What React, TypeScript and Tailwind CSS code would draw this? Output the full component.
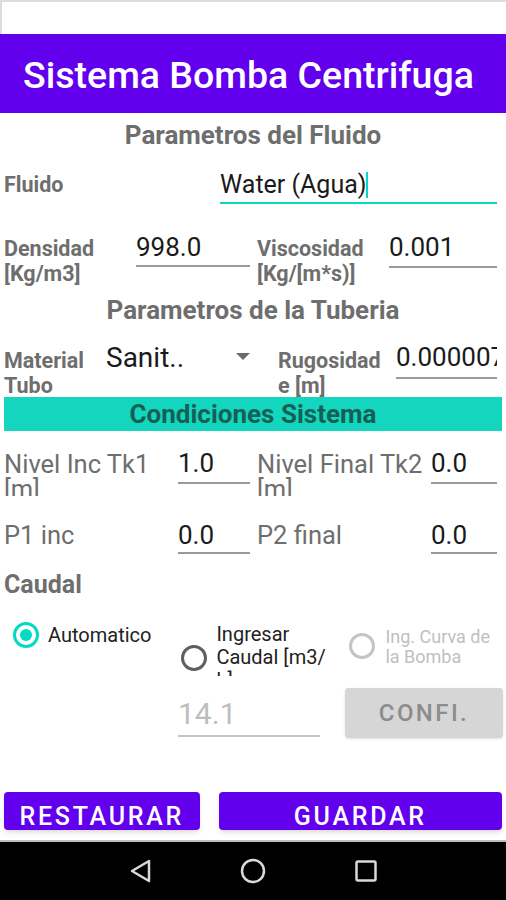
import React from "react";

const label = "font-bold text-[21.5px] leading-[25px] text-[#6e6e6e]";
const value = "text-[26px] leading-[28px] text-[#1a1a1a] whitespace-nowrap";

function Field({ w, text, mt, h, clip }: { w: string; text: string; mt: string; h: string; clip?: boolean }) {
  return (
    <div className={`${w} ${mt} ${h} border-b-2 border-[#9a9a9a] ${value} ${clip ? "overflow-hidden" : ""}`}>
      {text}
    </div>
  );
}

function Radio({ on, disabled }: { on?: boolean; disabled?: boolean }) {
  const ring = on ? "border-[#03DAC5]" : disabled ? "border-[#c4c4c4]" : "border-[#5f5f5f]";
  return (
    <div className={`w-[26px] h-[26px] rounded-full border-[3px] ${ring} flex items-center justify-center shrink-0`}>
      {on && <div className="w-[12px] h-[12px] rounded-full bg-[#03DAC5]" />}
    </div>
  );
}

export default function App() {
  return (
    <div className="w-[506px] h-[900px] bg-white overflow-hidden flex flex-col" style={{ fontFamily: "Roboto, 'Noto Sans', sans-serif" }}>
      {/* status area */}
      <div className="h-[34px] shrink-0 border-t-2 border-l-2 border-[#dcdcdc]" />

      {/* title bar */}
      <div className="h-[79px] shrink-0 bg-[#6200EE] flex items-center pl-[23px] pt-[5px]">
        <span className="text-white font-medium text-[37.5px] leading-none">Sistema Bomba Centrifuga</span>
      </div>

      <div className="h-[42px] shrink-0 flex items-center justify-center pt-[3px]">
        <span className="font-bold text-[26px] text-[#6e6e6e]">Parametros del Fluido</span>
      </div>

      {/* Fluido */}
      <div className="h-[60px] shrink-0 flex px-1">
        <div className={`w-[216px] pt-[17px] ${label}`}>Fluido</div>
        <div className="w-[277px] mt-[16px] h-[33px] border-b-2 border-[#03DAC5] whitespace-nowrap">
          <span className="text-[25px] leading-[28px] text-[#1a1a1a]">Water (Agua)</span>
          <span className="inline-block w-[2px] h-[26px] bg-[#03DAC5] align-[-5px]" />
        </div>
      </div>

      {/* Densidad / Viscosidad */}
      <div className="h-[80px] shrink-0 flex px-1">
        <div className={`w-[132px] pt-[21px] ${label}`}>Densidad<br />[Kg/m3]</div>
        <Field w="w-[114px]" mt="mt-[18px]" h="h-[34px]" text="998.0" />
        <div className={`ml-[7px] w-[132px] pt-[21px] ${label}`}>Viscosidad<br />[Kg/[m*s)]</div>
        <Field w="w-[108px]" mt="mt-[18px]" h="h-[35px]" text="0.001" />
      </div>

      <div className="h-[30px] shrink-0 flex items-center justify-center">
        <span className="font-bold text-[26px] text-[#6e6e6e]">Parametros de la Tuberia</span>
      </div>

      {/* Material / Rugosidad */}
      <div className="h-[72px] shrink-0 flex px-1">
        <div className={`w-[102px] pt-[23px] ${label}`}>Material<br />Tubo</div>
        <div className="w-[172px] mt-[18px] h-[30px] flex items-start pr-[28px]">
          <span className="text-[28px] leading-[30px] text-[#1a1a1a]">Sanit..</span>
          <svg className="ml-auto mt-[10px]" width="14" height="7" viewBox="0 0 14 7">
            <path d="M0 0 L14 0 L7 7 Z" fill="#6b6b6b" />
          </svg>
        </div>
        <div className={`w-[118px] pt-[23px] ${label}`}>Rugosidad<br />e [m]</div>
        <Field w="w-[101px]" mt="mt-[18px]" h="h-[36px]" text="0.000007" clip />
      </div>

      {/* Condiciones Sistema */}
      <div className="h-[34px] shrink-0 mx-1 bg-[#14d6bf] flex items-center justify-center">
        <span className="font-bold text-[26px] leading-[30px] text-[#165f56]">Condiciones Sistema</span>
      </div>

      {/* Nivel */}
      <div className="h-[74px] shrink-0 flex px-1">
        <div className="w-[174px] mt-[21px] h-[44px] overflow-hidden text-[25.5px] leading-[25px] text-[#6e6e6e]">Nivel Inc Tk1<br />[m]</div>
        <Field w="w-[72px]" mt="mt-[18px]" h="h-[35px]" text="1.0" />
        <div className="ml-[7px] w-[174px] mt-[21px] h-[44px] overflow-hidden text-[25.5px] leading-[25px] text-[#6e6e6e]">Nivel Final Tk2<br />[m]</div>
        <Field w="w-[66px]" mt="mt-[18px]" h="h-[35px]" text="0.0" />
      </div>

      {/* P1 / P2 */}
      <div className="h-[60px] shrink-0 flex px-1">
        <div className="w-[174px] pt-[17px] text-[25.5px] leading-[26px] text-[#6e6e6e]">P1 inc</div>
        <Field w="w-[72px]" mt="mt-[16px]" h="h-[33px]" text="0.0" />
        <div className="ml-[7px] w-[174px] pt-[17px] text-[25.5px] leading-[26px] text-[#6e6e6e]">P2 final</div>
        <Field w="w-[66px]" mt="mt-[16px]" h="h-[33px]" text="0.0" />
      </div>

      <div className="h-[40px] shrink-0 px-1 pt-[7px]">
        <span className="font-bold text-[25px] leading-[26px] text-[#6e6e6e]">Caudal</span>
      </div>

      {/* radios */}
      <div className="h-[78px] shrink-0 flex">
        <div className="ml-[13px] mt-[17px] flex items-center h-[26px]">
          <Radio on />
          <span className="ml-[9px] text-[20px] text-[#222]">Automatico</span>
        </div>
        <div className="ml-[30px] flex">
          <div className="mt-[40px]"><Radio /></div>
          <div className="ml-[9px] mt-[18px] h-[53px] overflow-hidden text-[20px] leading-[23px] text-[#222] w-[120px]">
            Ingresar<br />Caudal [m3/<br />h]
          </div>
        </div>
        <div className="ml-[13px] flex">
          <div className="mt-[28px]"><Radio disabled /></div>
          <div className="ml-[10px] mt-[22px] text-[18px] leading-[20px] text-[#c0c0c0]">
            Ing. Curva de<br />la Bomba
          </div>
        </div>
      </div>

      {/* caudal input + confi */}
      <div className="h-[62px] shrink-0 flex">
        <div className="ml-[178px] w-[142px] mt-[16px] h-[38px] border-b-2 border-[#c4c4c4]">
          <span className="text-[30px] leading-[30px] text-[#bdbdbd]">14.1</span>
        </div>
        <div className="ml-[25px] w-[158px] mt-[5px] h-[50px] rounded bg-[#d6d6d6] shadow-sm flex items-center justify-center">
          <span className="font-medium text-[24px] tracking-[0.1em] text-[#8c8c8c]">CONFI.</span>
        </div>
      </div>

      {/* buttons */}
      <div className="mt-[47px] h-[38px] shrink-0 flex px-1 gap-[19px]">
        <div className="w-[196px] h-[38px] rounded bg-[#6200EE] shadow-md flex items-end justify-center">
          <span className="font-medium text-[25px] leading-[26px] tracking-[0.11em] text-white">RESTAURAR</span>
        </div>
        <div className="w-[284px] h-[38px] rounded bg-[#6200EE] shadow-md flex items-end justify-center">
          <span className="font-medium text-[25px] leading-[26px] tracking-[0.11em] text-white">GUARDAR</span>
        </div>
      </div>

      <div className="mt-[10px] h-[2px] shrink-0 bg-[#bdbdbd]" />

      {/* nav bar */}
      <div className="flex-1 bg-black flex items-center justify-center gap-[88px]">
        <svg width="24" height="26" viewBox="0 0 24 26">
          <path d="M21 3 L4 13 L21 23 Z" fill="none" stroke="#d9d9d9" strokeWidth="2.5" strokeLinejoin="round" />
        </svg>
        <svg width="26" height="26" viewBox="0 0 26 26">
          <circle cx="13" cy="13" r="11" fill="none" stroke="#d9d9d9" strokeWidth="2.5" />
        </svg>
        <svg width="24" height="24" viewBox="0 0 24 24">
          <rect x="2.5" y="2.5" width="19" height="19" rx="1.5" fill="none" stroke="#d9d9d9" strokeWidth="2.5" />
        </svg>
      </div>
    </div>
  );
}
